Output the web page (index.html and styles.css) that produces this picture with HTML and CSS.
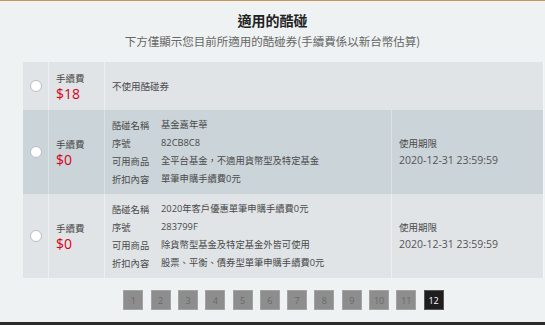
FILE: index.html
```html
<!DOCTYPE html>
<html lang="zh-Hant">
<head>
  <meta charset="UTF-8" />
  <title>適用的酷碰</title>
  <link rel="stylesheet" href="styles.css">
</head>
<body>
  <div class="page">
    <div class="head">
      <h2>適用的酷碰</h2>
      <p>下方僅顯示您目前所適用的酷碰券(手續費係以新台幣估算)</p>
    </div>

    <div class="coupon-table">
      <div class="row short">
        <div class="cell pick"><span class="radio"></span></div>
        <div class="cell fee">
          <div class="fee-label">手續費</div>
          <div class="fee-num">$18</div>
        </div>
        <div class="cell wide">不使用酷碰券</div>
      </div>

      <div class="row dark">
        <div class="cell pick"><span class="radio"></span></div>
        <div class="cell fee">
          <div class="fee-label">手續費</div>
          <div class="fee-num">$0</div>
        </div>
        <div class="cell info">
          <div class="line"><span class="key">酷碰名稱</span><span>基金嘉年華</span></div>
          <div class="line"><span class="key">序號</span><span>82CB8C8</span></div>
          <div class="line"><span class="key">可用商品</span><span>全平台基金，不適用貨幣型及特定基金</span></div>
          <div class="line"><span class="key">折扣內容</span><span>單筆申購手續費0元</span></div>
        </div>
        <div class="cell expire">
          <div class="exp-label">使用期限</div>
          <div class="exp-date">2020-12-31 23:59:59</div>
        </div>
      </div>

      <div class="row">
        <div class="cell pick"><span class="radio"></span></div>
        <div class="cell fee">
          <div class="fee-label">手續費</div>
          <div class="fee-num">$0</div>
        </div>
        <div class="cell info">
          <div class="line"><span class="key">酷碰名稱</span><span>2020年客戶優惠單筆申購手續費0元</span></div>
          <div class="line"><span class="key">序號</span><span>283799F</span></div>
          <div class="line"><span class="key">可用商品</span><span>除貨幣型基金及特定基金外皆可使用</span></div>
          <div class="line"><span class="key">折扣內容</span><span>股票、平衡、債券型單筆申購手續費0元</span></div>
        </div>
        <div class="cell expire">
          <div class="exp-label">使用期限</div>
          <div class="exp-date">2020-12-31 23:59:59</div>
        </div>
      </div>
    </div>

    <div class="pager">
      <span>1</span><span>2</span><span>3</span><span>4</span><span>5</span><span>6</span>
      <span>7</span><span>8</span><span>9</span><span>10</span><span>11</span><span class="on">12</span>
    </div>
  </div>
  <div class="footer"></div>
</body>
</html>
```

FILE: styles.css
```css
* {
  box-sizing: border-box;
}
body {
  margin: 0;
  background-color: #eef2f3;
  font-family: "Noto Sans CJK TC", "Noto Sans", sans-serif;
  color: #4a4a4a;
  border-top: 1px solid #c3955a;
}
.page {
  height: 321px;
}
.head {
  text-align: center;
  padding-top: 9px;
}
.head h2 {
  margin: 0;
  font-size: 14px;
  line-height: 20px;
  font-weight: 600;
  color: #222;
}
.head p {
  margin: 1px 0 0;
  font-size: 11.5px;
  line-height: 20px;
  color: #666;
}
.coupon-table {
  margin: 11px 0 0 23px;
  width: 521px;
  border-right: 1px solid #f4f6f7;
}
.row {
  display: flex;
  background-color: #e0e4e7;
  height: 84px;
}
.row.short {
  height: 48px;
}
.row.dark {
  background-color: #cad4d9;
}
.cell {
  display: flex;
  flex-direction: column;
  justify-content: center;
}
.cell + .cell {
  border-left: 1px solid #edf0f2;
}
.row.dark .cell + .cell {
  border-left-color: #dbe2e5;
}
.pick {
  width: 25px;
  align-items: center;
}
.radio {
  width: 12px;
  height: 12px;
  border-radius: 50%;
  background-color: #fff;
  border: 1px solid #b9bec2;
  margin-left: 1px;
}
.fee {
  width: 56px;
  padding-left: 7px;
}
.fee-label {
  font-size: 9.5px;
  line-height: 14px;
}
.fee-num {
  font-family: "Open Sans", sans-serif;
  font-size: 14px;
  line-height: 17px;
  color: #d7001a;
}
.wide {
  flex: 1;
  padding-left: 7px;
  font-size: 9.5px;
}
.info {
  width: 287px;
  padding-left: 7px;
  font-size: 9.3px;
}
.line {
  display: flex;
  line-height: 18px;
}
.key {
  width: 49px;
  flex-shrink: 0;
}
.line span:last-child {
  font-family: "Open Sans", "Noto Sans CJK TC", sans-serif;
}
.expire {
  flex: 1;
  padding-left: 7px;
}
.exp-label {
  font-size: 9.5px;
  line-height: 16px;
}
.exp-date {
  font-family: "Open Sans", sans-serif;
  font-size: 10.5px;
  line-height: 18px;
  color: #555;
}
.pager {
  display: flex;
  justify-content: center;
  gap: 7.3px;
  margin: 12px 0 0 23px;
  width: 521px;
}
.pager span {
  width: 20px;
  height: 20px;
  background-color: #8d8d8d;
  border: 1px solid #a3a3a3;
  color: #6a6a6a;
  font-family: "Open Sans", sans-serif;
  font-size: 9px;
  display: flex;
  align-items: center;
  justify-content: center;
}
.pager span.on {
  background-color: #1e1e1e;
  border-color: #555;
  color: #fff;
}
.footer {
  height: 3px;
  background-color: #2b2b2b;
}
```
